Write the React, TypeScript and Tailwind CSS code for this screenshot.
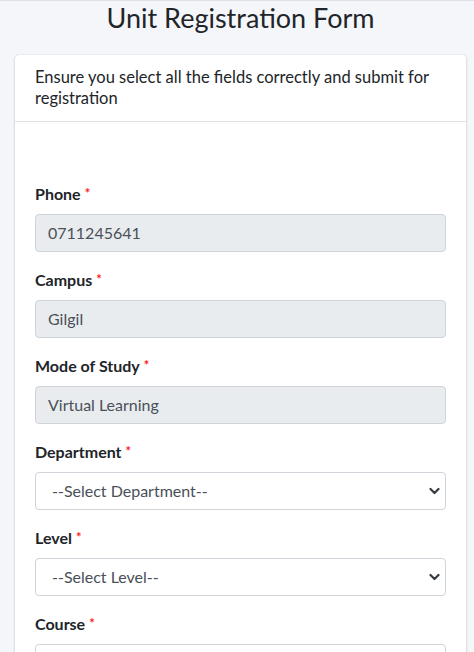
import React from "react";

const Req = () => <span className="text-[#ff1a1a] text-[13px] align-top ml-[4px] relative top-[-1px]">*</span>;

const Chevron = () => (
  <svg className="absolute right-[5px] top-1/2 -translate-y-1/2 pointer-events-none" width="11" height="8" viewBox="0 0 11 8">
    <path d="M1.5 2 L5.5 6 L9.5 2" fill="none" stroke="#343a40" strokeWidth="2.2" strokeLinecap="round" strokeLinejoin="round" />
  </svg>
);

function Field({ label, children }: { label: string; children: React.ReactNode }) {
  return (
    <div className="mb-4">
      <div className="font-bold text-[16px] leading-[24px] mb-2 text-[#212529]">
        {label}
        <Req />
      </div>
      {children}
    </div>
  );
}

function Disabled({ value }: { value: string }) {
  return (
    <div className="h-[38px] rounded-[4px] border border-[#ced4da] bg-[#e9ecef] px-3 flex items-center text-[16px] text-[#495057]">
      {value}
    </div>
  );
}

function Select({ value }: { value: string }) {
  return (
    <div className="relative h-[38px] rounded-[4px] border border-[#ced4da] bg-white pl-4 flex items-center text-[16px] text-[#495057]">
      {value}
      <Chevron />
    </div>
  );
}

export default function App() {
  return (
    <div className="min-h-[652px] bg-[#f4f6f9] border-t border-[#dee2e6] text-[#212529] overflow-hidden" style={{ fontFamily: "Lato, 'Noto Sans', sans-serif" }}>
      <div className="ml-[15px] mr-[8px]">
        <h1 className="text-center text-[27px] leading-[32px] font-normal mt-[1px] mb-[21px]">Unit Registration Form</h1>
        <div className="bg-white rounded-[4px] shadow-[0_0_1px_rgba(0,0,0,0.125),0_1px_3px_rgba(0,0,0,0.2)]">
          <div className="px-5 py-3 border-b border-[#dee2e6] text-[16.5px] leading-[21px]">
            Ensure you select all the fields correctly and submit for registration
          </div>
          <div className="px-5 pt-[60px]">
            <Field label="Phone"><Disabled value="0711245641" /></Field>
            <Field label="Campus"><Disabled value="Gilgil" /></Field>
            <Field label="Mode of Study"><Disabled value="Virtual Learning" /></Field>
            <Field label="Department"><Select value="--Select Department--" /></Field>
            <Field label="Level"><Select value="--Select Level--" /></Field>
            <Field label="Course"><Select value="--Select Course--" /></Field>
          </div>
        </div>
      </div>
    </div>
  );
}
